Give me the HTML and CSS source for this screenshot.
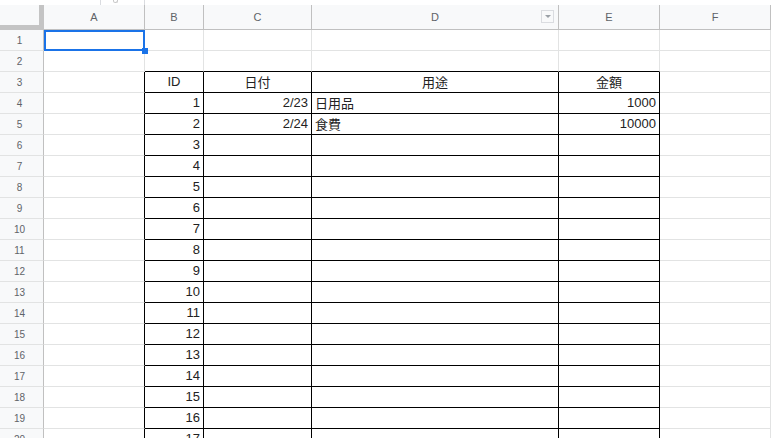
FILE: index.html
```html
<!DOCTYPE html>
<html>
<head>
<meta charset="utf-8">
<link rel="stylesheet" href="styles.css">
</head>
<body>
<div class="top"><div class="tb"><span class="dot"></span></div></div>
<div class="sheet">
  <div class="corner"></div><div class="ch">A</div><div class="ch">B</div><div class="ch">C</div><div class="ch dd">D<span class="ddbtn"></span></div><div class="ch">E</div><div class="ch">F</div>

  <div class="rh">1</div><div class="c rel"><div class="sel"><div class="handle"></div></div></div><div class="c"></div><div class="c"></div><div class="c"></div><div class="c"></div><div class="c"></div>
  <div class="rh">2</div><div class="c"></div><div class="c bb"></div><div class="c bb"></div><div class="c bb"></div><div class="c bb"></div><div class="c"></div>
  <div class="rh">3</div><div class="c br"></div><div class="c t ctr">ID</div><div class="c t ctr jp">日付</div><div class="c t ctr jp">用途</div><div class="c t ctr jp">金額</div><div class="c"></div>
  <div class="rh">4</div><div class="c br"></div><div class="c t r">1</div><div class="c t r">2/23</div><div class="c t jp">日用品</div><div class="c t r">1000</div><div class="c"></div>
  <div class="rh">5</div><div class="c br"></div><div class="c t r">2</div><div class="c t r">2/24</div><div class="c t jp">食費</div><div class="c t r">10000</div><div class="c"></div>
  <div class="rh">6</div><div class="c br"></div><div class="c t r">3</div><div class="c t"></div><div class="c t"></div><div class="c t"></div><div class="c"></div>
  <div class="rh">7</div><div class="c br"></div><div class="c t r">4</div><div class="c t"></div><div class="c t"></div><div class="c t"></div><div class="c"></div>
  <div class="rh">8</div><div class="c br"></div><div class="c t r">5</div><div class="c t"></div><div class="c t"></div><div class="c t"></div><div class="c"></div>
  <div class="rh">9</div><div class="c br"></div><div class="c t r">6</div><div class="c t"></div><div class="c t"></div><div class="c t"></div><div class="c"></div>
  <div class="rh">10</div><div class="c br"></div><div class="c t r">7</div><div class="c t"></div><div class="c t"></div><div class="c t"></div><div class="c"></div>
  <div class="rh">11</div><div class="c br"></div><div class="c t r">8</div><div class="c t"></div><div class="c t"></div><div class="c t"></div><div class="c"></div>
  <div class="rh">12</div><div class="c br"></div><div class="c t r">9</div><div class="c t"></div><div class="c t"></div><div class="c t"></div><div class="c"></div>
  <div class="rh">13</div><div class="c br"></div><div class="c t r">10</div><div class="c t"></div><div class="c t"></div><div class="c t"></div><div class="c"></div>
  <div class="rh">14</div><div class="c br"></div><div class="c t r">11</div><div class="c t"></div><div class="c t"></div><div class="c t"></div><div class="c"></div>
  <div class="rh">15</div><div class="c br"></div><div class="c t r">12</div><div class="c t"></div><div class="c t"></div><div class="c t"></div><div class="c"></div>
  <div class="rh">16</div><div class="c br"></div><div class="c t r">13</div><div class="c t"></div><div class="c t"></div><div class="c t"></div><div class="c"></div>
  <div class="rh">17</div><div class="c br"></div><div class="c t r">14</div><div class="c t"></div><div class="c t"></div><div class="c t"></div><div class="c"></div>
  <div class="rh">18</div><div class="c br"></div><div class="c t r">15</div><div class="c t"></div><div class="c t"></div><div class="c t"></div><div class="c"></div>
  <div class="rh">19</div><div class="c br"></div><div class="c t r">16</div><div class="c t"></div><div class="c t"></div><div class="c t"></div><div class="c"></div>
  <div class="rh">20</div><div class="c br"></div><div class="c t r">17</div><div class="c t"></div><div class="c t"></div><div class="c t"></div><div class="c"></div>
</div>
</body>
</html>
```

FILE: styles.css
```css
* { box-sizing: border-box; }
html, body { margin: 0; padding: 0; background: #fff; overflow: hidden; }
body { width: 771px; height: 438px; font-family: "Liberation Sans", Arial, sans-serif; }

.top { height: 5px; position: relative; background: #fff; }
.tb { margin-left: 100px; width: 45px; height: 5px; border-left: 1px solid #dadce0; border-right: 1px solid #dadce0; display: flex; justify-content: center; }
.dot { width: 5px; height: 3px; border: 1px solid #c8c8c8; border-top: none; border-radius: 0 0 3px 3px; margin-left: -14px; }

.sheet {
  display: grid;
  grid-template-columns: 44px 101px 59px 108px 247px 101px 1fr;
  grid-template-rows: 25px;
  grid-auto-rows: 21px;
}

.corner {
  background: #f8f9fa;
  border-right: 5px solid #c4c4c4;
  border-bottom: 5px solid #c4c4c4;
}
.ch {
  background: #f8f9fa;
  border-right: 1px solid #c0c0c0;
  border-bottom: 1px solid #c0c0c0;
  color: #5f6368;
  font-size: 11px;
  display: flex;
  align-items: center;
  justify-content: center;
  padding-bottom: 1px;
}
.dd { position: relative; }
.ddbtn {
  position: absolute;
  right: 4px;
  top: 5px;
  width: 13px;
  height: 13px;
  border: 1px solid #dadce0;
  background: #f8f9fa;
}
.ddbtn::after {
  content: "";
  position: absolute;
  left: 3px;
  top: 4px;
  border-left: 3px solid transparent;
  border-right: 3px solid transparent;
  border-top: 3px solid #9aa0a6;
}

.rh {
  background: #f8f9fa;
  border-right: 1px solid #c0c0c0;
  border-bottom: 1px solid #e2e3e3;
  color: #5f6368;
  font-size: 10px;
  display: flex;
  align-items: center;
  justify-content: center;
  padding-right: 4px;
}

.c {
  border-right: 1px solid #e2e3e3;
  border-bottom: 1px solid #e2e3e3;
  font-size: 13px;
  color: #222;
  line-height: 20px;
  padding: 0 3px;
  white-space: nowrap;
  overflow: hidden;
}
.c.t { border-right-color: #000; border-bottom-color: #000; }
.c.bb { border-bottom-color: #000; }
.c.br { border-right-color: #000; }
.ctr { text-align: center; }
.r { text-align: right; }
.jp { font-family: "Noto Sans CJK JP", "Liberation Sans", sans-serif; font-size: 13px; }

.rel { position: relative; overflow: visible; }
.sel {
  position: absolute;
  left: 0;
  top: 0;
  right: -1px;
  bottom: -1px;
  border: 2px solid #1a73e8;
}
.handle {
  position: absolute;
  right: -5px;
  bottom: -5px;
  width: 6px;
  height: 6px;
  background: #1a73e8;
}
```
